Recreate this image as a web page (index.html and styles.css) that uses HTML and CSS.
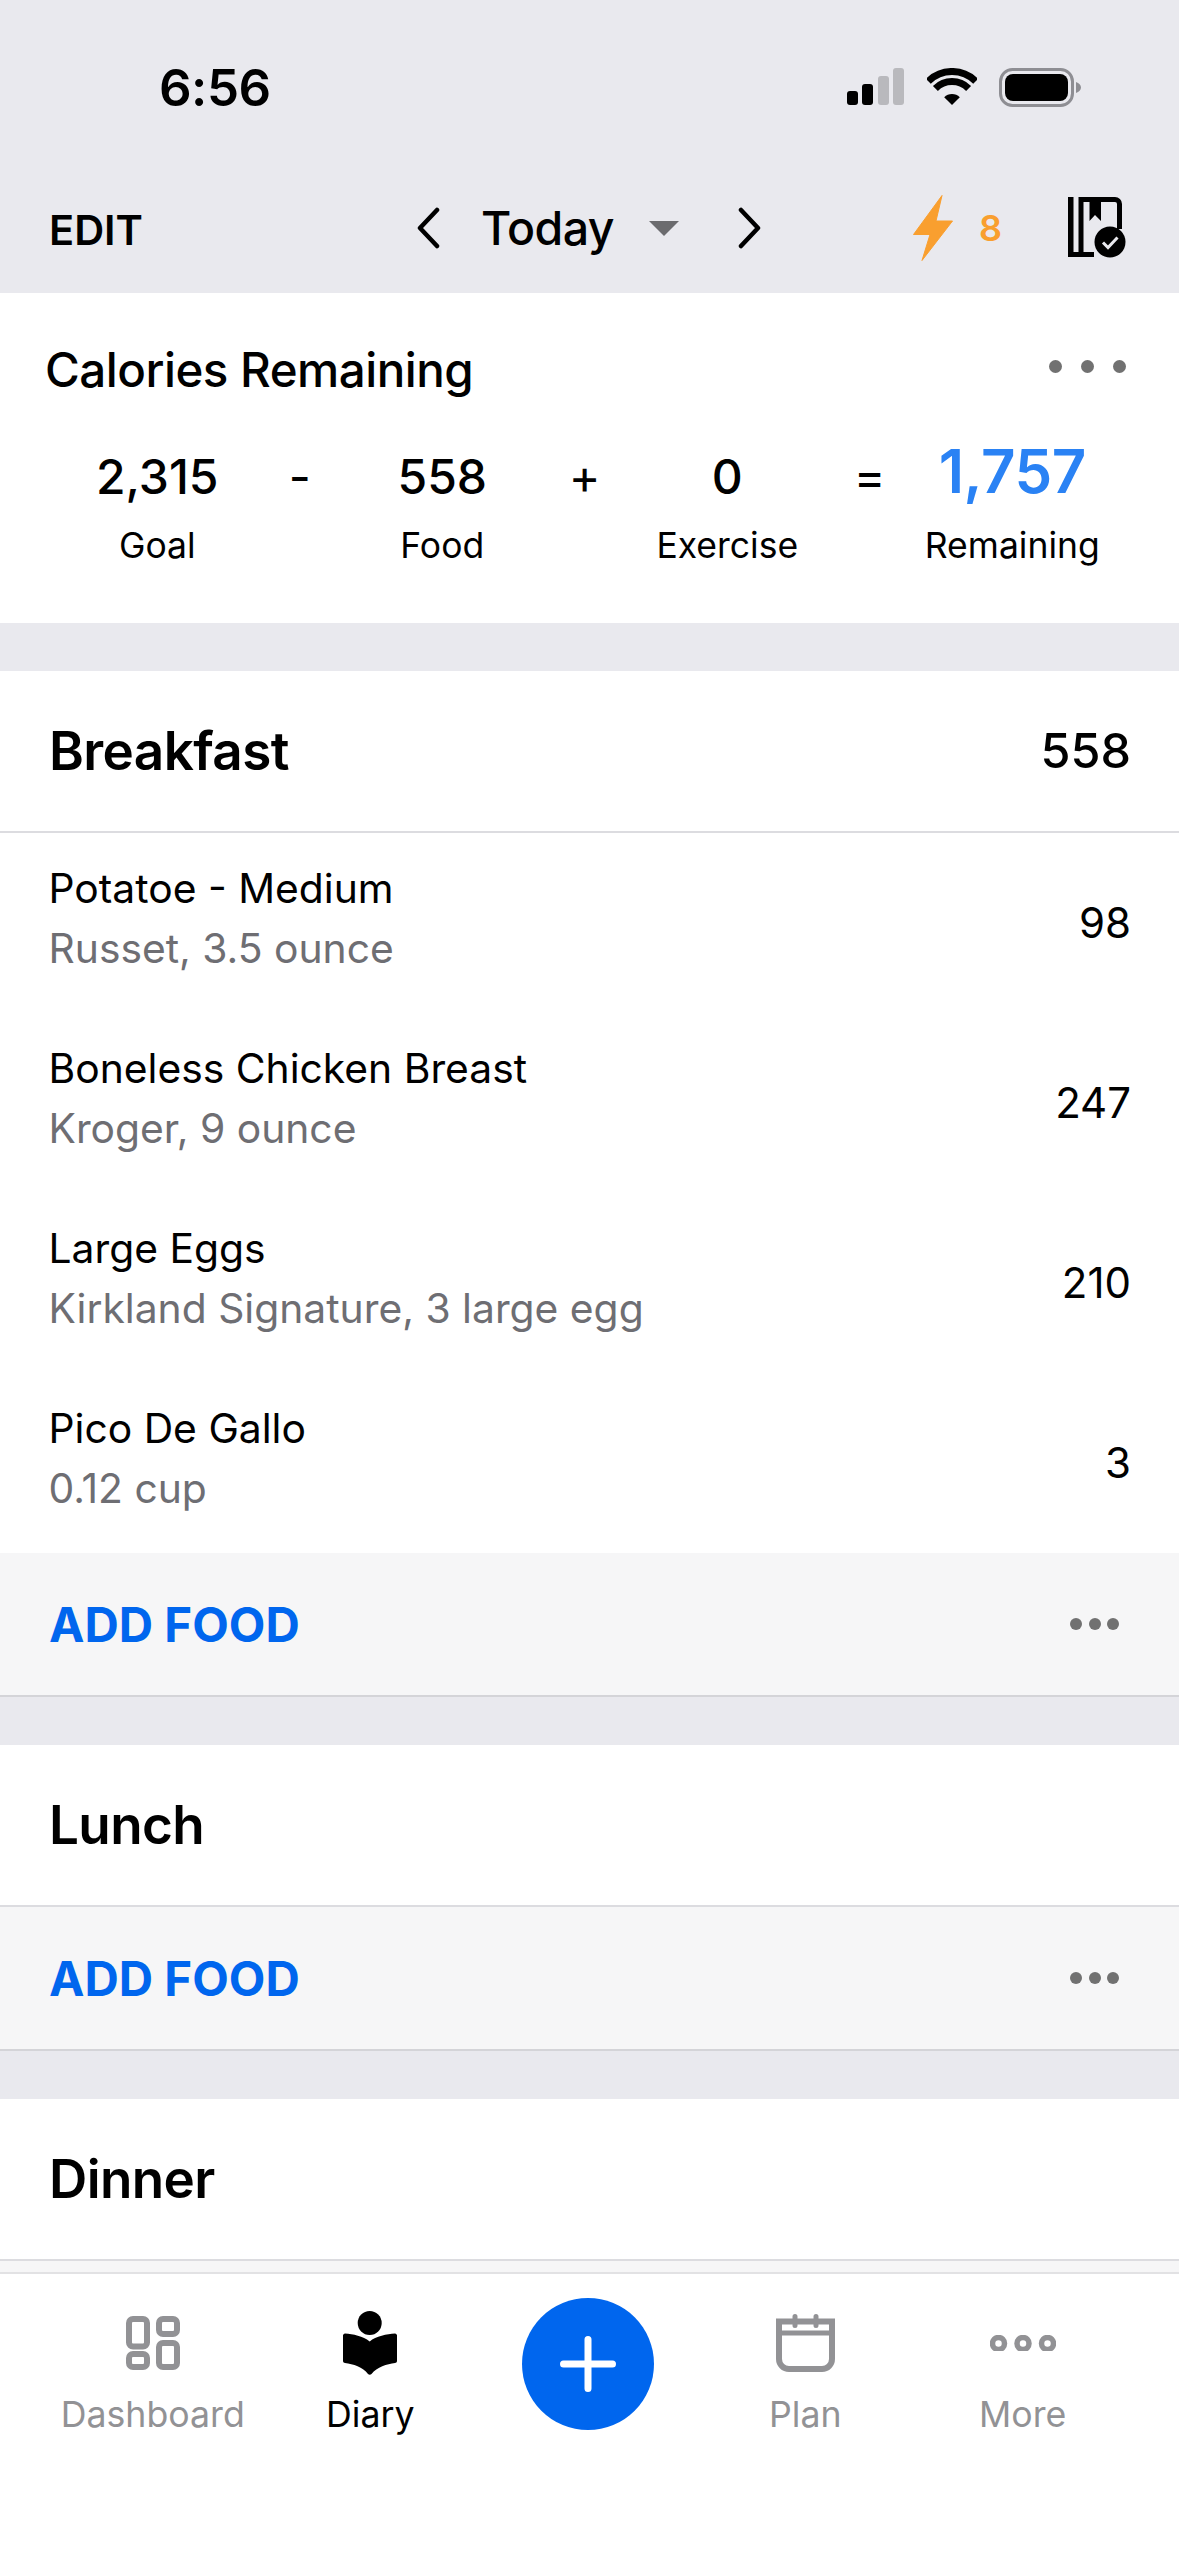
FILE: index.html
```html
<!DOCTYPE html>
<html lang="en">
<head>
<meta charset="utf-8">
<title>Diary</title>
<link rel="stylesheet" href="styles.css">
</head>
<body>
<div class="app">
  <main class="content">
    <header class="top">
      <div class="status">
        <span class="time">6:56</span>
        <div class="status-icons">
          <div class="signal"><i class="b1"></i><i class="b2"></i><i class="b3 off"></i><i class="b4 off"></i></div>
          <svg class="wifi" width="50" height="37" viewBox="0 0 50 37"><path d="M1.3 13.3A33.5 33.5 0 0 1 48.7 13.3M8.4 20.4A23.5 23.5 0 0 1 41.6 20.4" fill="none" stroke="#000" stroke-width="7"/><path d="M25 37L17.2 29.2A11 11 0 0 1 32.8 29.2Z"/></svg>
          <svg class="battery" width="82" height="39" viewBox="0 0 82 39"><rect x="1.5" y="1.5" width="72" height="36" rx="12" fill="none" stroke="#8e8e93" stroke-width="3"/><rect x="6" y="6" width="63" height="27" rx="8"/><path d="M77 14c3 1 5 3 5 5.500s-2 4.500-5 5.500z" fill="#8e8e93"/></svg>
        </div>
      </div>
      <nav class="toolbar">
        <span class="edit">EDIT</span>
        <div class="date-nav">
          <svg class="chev" width="24" height="42" viewBox="0 0 24 42"><path d="M21 3L4 21L21 39" fill="none" stroke="#000" stroke-width="4.500" stroke-linecap="round" stroke-linejoin="round"/></svg>
          <span class="today">Today</span>
          <svg class="caret" width="30" height="15" viewBox="0 0 30 15"><path d="M0 0H30L15 15Z" fill="#6b6b6e"/></svg>
          <svg class="chev chev-r" width="24" height="42" viewBox="0 0 24 42"><path d="M3 3L20 21L3 39" fill="none" stroke="#000" stroke-width="4.500" stroke-linecap="round" stroke-linejoin="round"/></svg>
        </div>
        <div class="streak">
          <svg width="40" height="66" viewBox="0 0 40 66"><path d="M29 0.500L0.500 39.500H17L9 65.500L39.500 26H23Z" fill="#f99f2f" stroke="#f99f2f" stroke-width="1" stroke-linejoin="round"/></svg>
          <span class="streak-n">8</span>
        </div>
        <svg class="book-check" width="58" height="61" viewBox="0 0 58 61"><path d="M0 0H5.500V60H0ZM10.500 0H15.500V60H10.500ZM15 0H47A7 7 0 0 1 54 7V32H49V7A2 2 0 0 0 47 5H33V24L27 18L21.500 24V5H15ZM15 55H26V60H15Z"/><path d="M0 55H12V60H0Z"/><circle cx="42" cy="45" r="15.500"/><path d="M35 45.500L40 50.500L49.500 40.500" fill="none" stroke="#e9e9ee" stroke-width="3"/></svg>
      </nav>
    </header>

    <section class="summary">
      <div class="summary-head">
        <h2 class="summary-title">Calories Remaining</h2>
        <div class="dots dots-lg"><i></i><i></i><i></i></div>
      </div>
      <div class="equation">
        <div class="term"><span class="num">2,315</span><span class="cap">Goal</span></div>
        <span class="op">-</span>
        <div class="term"><span class="num">558</span><span class="cap">Food</span></div>
        <span class="op">+</span>
        <div class="term"><span class="num">0</span><span class="cap">Exercise</span></div>
        <span class="op">=</span>
        <div class="term"><span class="num num-hi">1,757</span><span class="cap">Remaining</span></div>
      </div>
    </section>

    <section class="meal meal-first">
      <div class="meal-head"><h3>Breakfast</h3><span class="meal-total">558</span></div>
      <div class="food"><div class="food-text"><span class="food-name">Potatoe - Medium</span><span class="food-sub">Russet, 3.5 ounce</span></div><span class="food-cal">98</span></div>
      <div class="food"><div class="food-text"><span class="food-name">Boneless Chicken Breast</span><span class="food-sub">Kroger, 9 ounce</span></div><span class="food-cal">247</span></div>
      <div class="food"><div class="food-text"><span class="food-name">Large Eggs</span><span class="food-sub">Kirkland Signature, 3 large egg</span></div><span class="food-cal">210</span></div>
      <div class="food"><div class="food-text"><span class="food-name">Pico De Gallo</span><span class="food-sub">0.12 cup</span></div><span class="food-cal">3</span></div>
      <div class="add"><span class="add-label">ADD FOOD</span><div class="dots"><i></i><i></i><i></i></div></div>
    </section>

    <section class="meal">
      <div class="meal-head"><h3>Lunch</h3></div>
      <div class="add"><span class="add-label">ADD FOOD</span><div class="dots"><i></i><i></i><i></i></div></div>
    </section>

    <section class="meal">
      <div class="meal-head"><h3>Dinner</h3></div>
      <div class="add"></div>
    </section>
  </main>

  <footer class="tabbar">
    <div class="tab">
      <div class="tab-icon"><svg width="54" height="54" viewBox="0 0 54 54" fill="none" stroke="#929295" stroke-width="6"><rect x="3" y="3" width="18" height="27.500" rx="4"/><rect x="33" y="3" width="18" height="15" rx="4"/><rect x="3" y="38" width="18" height="13" rx="4"/><rect x="33" y="27" width="18" height="24" rx="4"/></svg></div>
      <span class="tab-label">Dashboard</span>
    </div>
    <div class="tab tab-on">
      <div class="tab-icon"><svg width="54" height="64" viewBox="0 0 54 64"><circle cx="26.700" cy="12" r="12"/><path d="M2 22.500C10 23 20 25 26.700 30.500C33 25 44 23 52 22.500C53 22.500 54 23.500 54 24.500V50C54 51 53 52 52 52C44 53 34 56 28.500 63C27.500 64 26 64 25 63C20 56 10 53 2 52C1 52 0 51 0 50V24.500C0 23.500 1 22.500 2 22.500Z"/></svg></div>
      <span class="tab-label">Diary</span>
    </div>
    <div class="tab-add">
      <div class="fab"><svg width="56" height="56" viewBox="0 0 56 56"><path d="M28 3.500V52.500M3.500 28H52.500" stroke="#fff" stroke-width="7" stroke-linecap="round"/></svg></div>
    </div>
    <div class="tab">
      <div class="tab-icon"><svg width="59" height="58" viewBox="0 0 59 58" fill="none" stroke="#929295"><path d="M3 7.500H56V45A10 10 0 0 1 46 55H13A10 10 0 0 1 3 45Z" stroke-width="6"/><path d="M3 19H56" stroke-width="5"/><path d="M19 2.500V11.500M40 2.500V11.500" stroke-width="5" stroke-linecap="round"/></svg></div>
      <span class="tab-label">Plan</span>
    </div>
    <div class="tab">
      <div class="tab-icon"><svg width="66" height="16" viewBox="0 0 66 16" fill="none" stroke="#929295" stroke-width="5.500"><circle cx="8.500" cy="8.500" r="6"/><circle cx="33" cy="8.500" r="6"/><circle cx="57.500" cy="8.500" r="6"/></svg></div>
      <span class="tab-label">More</span>
    </div>
  </footer>
</div>
</body>
</html>
```
FILE: styles.css
```css
* { box-sizing: border-box; }
html, body { margin: 0; padding: 0; }
body { background: #fff; font-family: Inter, "Noto Sans", "Liberation Sans", sans-serif; color: #000; }
.app { width: 1179px; height: 2556px; display: flex; flex-direction: column; overflow: hidden; }
.content { flex: 1 1 0; min-height: 0; overflow: hidden; background: #e9e9ee; }

.top { height: 293px; display: flex; flex-direction: column; background: #e9e9ee; }
.status { height: 175px; padding: 61px 0 0 159px; display: flex; justify-content: space-between; align-items: flex-start; }
.time { font-size: 51px; font-weight: 600; line-height: 54px; letter-spacing: -0.5px; }
.status-icons { display: flex; align-items: flex-start; gap: 23px; padding: 7px 98px 0 0; }
.signal { display: flex; align-items: flex-end; gap: 4.500px; height: 37px; }
.signal i { display: block; width: 11px; border-radius: 3px; background: #000; }
.signal .b1 { height: 14px; }
.signal .b2 { height: 21px; }
.signal .b3 { height: 29px; }
.signal .b4 { height: 37px; }
.signal .off { background: #b9b9bd; }
.wifi { display: block; }
.battery { display: block; margin-left: -1px; }

.toolbar { flex: 1; position: relative; display: flex; align-items: center; padding: 0 0 12px 49px; }
.edit { flex: none; font-size: 41.500px; font-weight: 600; line-height: 50px; width: 367px; margin-top: 4px; }
.date-nav { flex: none; display: flex; align-items: center; width: 430px; }
.today { font-size: 46.500px; font-weight: 500; line-height: 56px; margin-left: 41px; letter-spacing: -0.6px; }
.caret { margin-left: 35px; }
.chev-r { margin-left: 59px; }
.streak { flex: none; display: flex; align-items: center; gap: 26px; margin-left: 67px; width: 155px; }
.streak-n { font-size: 36px; font-weight: 600; color: #f99f2f; line-height: 40px; }
.book-check { flex: none; display: block; margin-top: -2px; }

.summary { height: 330px; background: #fff; padding: 0 53px 0 45px; }
.summary-head { height: 122px; display: flex; justify-content: space-between; align-items: center; padding-top: 32px; }
.summary-title { margin: 0; font-size: 47.500px; font-weight: 500; line-height: 54px; letter-spacing: -0.5px; }
.dots { display: flex; gap: 6.500px; }
.dots i { display: block; width: 12px; height: 12px; border-radius: 50%; background: #717171; }
.dots-lg { gap: 19px; margin-top: -8px; }
.dots-lg i { width: 13px; height: 13px; }
.equation { display: grid; grid-template-columns: repeat(7, 142.500px); margin-left: 41px; align-items: start; padding-top: 34px; }
.term { display: flex; flex-direction: column; align-items: center; }
.num { font-size: 48px; font-weight: 500; line-height: 56px; height: 56px; white-space: nowrap; }
.num-hi { font-size: 60px; font-weight: 600; color: #2a82f4; margin-top: -6px; height: 56px; margin-bottom: 6px; line-height: 56px; letter-spacing: -0.5px; }
.cap { font-size: 35.500px; line-height: 44px; margin-top: 19px; white-space: nowrap; }
.op { font-size: 48px; line-height: 56px; text-align: center; }

.meal { margin-top: 48px; background: #fff; }
.meal-head { height: 162px; display: flex; justify-content: space-between; align-items: center; padding: 0 48px 0 49px; border-bottom: 2px solid #dcdce0; }
.meal-head h3 { margin: 0; font-size: 53px; font-weight: 600; line-height: 60px; letter-spacing: -0.6px; }
.meal-total { font-size: 48.500px; font-weight: 500; line-height: 56px; }
.food { height: 180px; display: flex; justify-content: space-between; align-items: center; padding: 0 48px 0 48.500px; }
.food-text { display: flex; flex-direction: column; gap: 10px; padding-bottom: 10px; }
.food-name { font-size: 40.800px; line-height: 50px; }
.food-sub { font-size: 40.800px; line-height: 50px; color: #6e6e73; }
.food-cal { font-size: 42px; line-height: 50px; }
.add { height: 144px; background: #f6f6f7; display: flex; justify-content: space-between; align-items: center; padding: 0 60px 0 49px; border-bottom: 2px solid #d4d4d8; }
.add-label { font-size: 47.500px; font-weight: 700; color: #0066ee; line-height: 54px; margin-top: 2px; }

.tabbar { flex: none; height: 284px; background: #fff; border-top: 2px solid #e2e2e4; padding: 0 48px 0 44px; display: grid; grid-template-columns: repeat(5, 217.500px); align-items: start; }
.tab { display: flex; flex-direction: column; align-items: center; padding-top: 34px; color: #929295; }
.tab-on { color: #000; }
.tab-icon { height: 70px; display: flex; align-items: center; justify-content: center; }
.tab-icon svg { display: block; }
.tab-label { font-size: 35.700px; line-height: 44px; margin-top: 14px; }
.tab-add { display: flex; justify-content: center; padding-top: 24px; }
.fab { width: 132px; height: 132px; border-radius: 50%; background: #0066ee; display: flex; align-items: center; justify-content: center; }
.fab svg { display: block; }
```
